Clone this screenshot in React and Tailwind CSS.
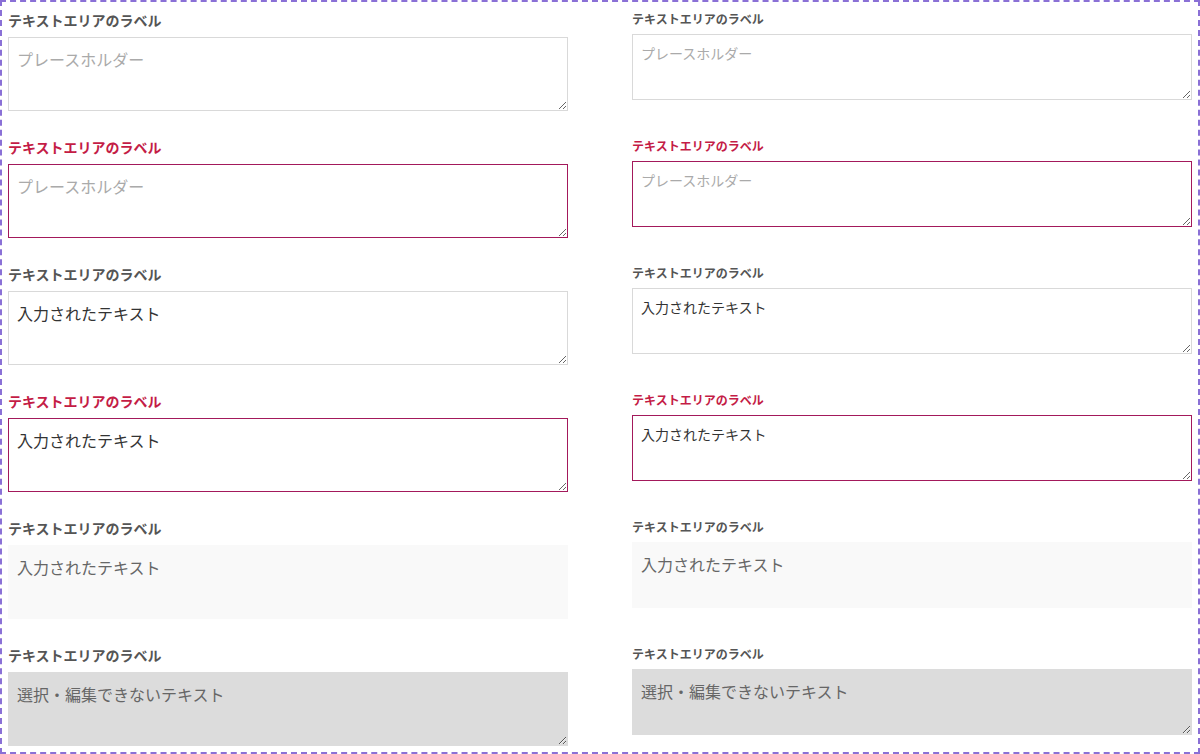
import React from "react";

const font = { fontFamily: '"Noto Sans CJK JP", "Noto Sans", sans-serif' };

const rows = [
  { type: "normal", placeholder: "プレースホルダー" },
  { type: "error", placeholder: "プレースホルダー" },
  { type: "normal", value: "入力されたテキスト" },
  { type: "error", value: "入力されたテキスト" },
  { type: "readonly", value: "入力されたテキスト" },
  { type: "disabled", value: "選択・編集できないテキスト" },
];

function LeftField({ row }) {
  const isErr = row.type === "error";
  let cls =
    "block w-full h-[74px] px-2 pt-[9px] pb-2 text-[16px] leading-6 outline-none placeholder:text-[#aaaaaa] ";
  if (row.type === "normal") cls += "border border-[#d9d9d9] bg-white text-[#333333]";
  if (row.type === "error") cls += "border border-[#a3195b] bg-white text-[#333333]";
  if (row.type === "readonly") cls += "border border-transparent bg-[#f9f9f9] text-[#666666] resize-none";
  if (row.type === "disabled") cls += "border border-transparent bg-[#dcdcdc] text-[#666666]";
  return (
    <div className="mb-[26px]">
      <label
        className={
          "block text-[14px] leading-5 font-bold mb-[7px] " +
          (isErr ? "text-[#c41c46]" : "text-[#555555]")
        }
      >
        テキストエリアのラベル
      </label>
      <textarea
        className={cls}
        style={font}
        placeholder={row.placeholder}
        defaultValue={row.value}
        readOnly={row.type === "readonly"}
        disabled={row.type === "disabled"}
      />
    </div>
  );
}

function RightField({ row }) {
  const isErr = row.type === "error";
  let cls =
    "block w-full h-[66px] px-2 outline-none placeholder:text-[#aaaaaa] ";
  if (row.type === "readonly" || row.type === "disabled") {
    cls += "pt-[9px] text-[16px] leading-6 ";
  } else {
    cls += "pt-[7px] text-[14px] leading-[22px] ";
  }
  if (row.type === "normal") cls += "border border-[#d9d9d9] bg-white text-[#333333]";
  if (row.type === "error") cls += "border border-[#a3195b] bg-white text-[#333333]";
  if (row.type === "readonly") cls += "border border-transparent bg-[#f9f9f9] text-[#666666] resize-none";
  if (row.type === "disabled") cls += "border border-transparent bg-[#dcdcdc] text-[#666666]";
  return (
    <div className="mb-[38px]">
      <label
        className={
          "block text-[12px] leading-4 font-bold mb-[7px] " +
          (isErr ? "text-[#c41c46]" : "text-[#555555]")
        }
      >
        テキストエリアのラベル
      </label>
      <textarea
        className={cls}
        style={font}
        placeholder={row.placeholder}
        defaultValue={row.value}
        readOnly={row.type === "readonly"}
        disabled={row.type === "disabled"}
      />
    </div>
  );
}

export default function App() {
  return (
    <div
      className="w-[1200px] h-[754px] box-border border-2 border-dashed border-[#8a70d6] bg-white px-[6px] overflow-hidden"
      style={font}
    >
      <div className="grid grid-cols-2 gap-x-16">
        <div className="pt-[8px]">
          {rows.map((r, i) => (
            <LeftField key={i} row={r} />
          ))}
        </div>
        <div className="pt-[9px]">
          {rows.map((r, i) => (
            <RightField key={i} row={r} />
          ))}
        </div>
      </div>
    </div>
  );
}
